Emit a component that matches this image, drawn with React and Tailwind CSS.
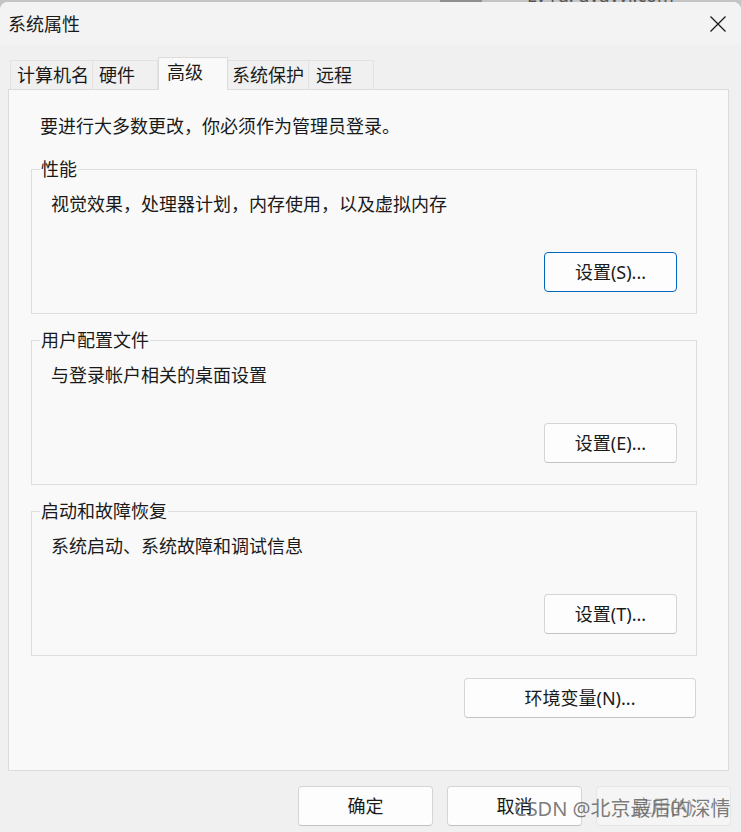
import React from "react";

const FONT = {
  fontFamily:
    '"Noto Sans", "Noto Sans CJK SC", "Microsoft YaHei", sans-serif',
};

function Btn({ children, className = "", focused = false, disabled = false }) {
  return (
    <div
      className={
        "flex items-center justify-center rounded-[4px] text-[18px] leading-[24px] " +
        (focused
          ? "border border-[#0067c0] bg-[#fdfdfd] text-[#1a1a1a] "
          : disabled
          ? "border border-[#e6e6e6] bg-[#f5f5f5] text-[#a3a3a3] "
          : "border border-[#d5d5d5] border-b-[#c2c2c2] bg-[#fdfdfd] text-[#1a1a1a] ") +
        className
      }
    >
      {children}
    </div>
  );
}

function Group({ title, text, button, focused }) {
  return (
    <fieldset className="ml-[22px] w-[666px] border border-[#dedede] pb-[21px]">
      <legend className="ml-[8px] px-[1px] text-[18px] leading-[22px] text-[#1a1a1a]">
        {title}
      </legend>
      <div className="mt-[12px] pl-[19px] text-[18px] leading-[24px] text-[#1a1a1a]">
        {text}
      </div>
      <div className="mt-[36px] flex justify-end pr-[19px]">
        <Btn focused={focused} className="h-[40px] w-[133px]">
          {button}
        </Btn>
      </div>
    </fieldset>
  );
}

const tabs = [
  { label: "计算机名", cls: "w-[83px] pl-[6px] border-l" },
  { label: "硬件", cls: "w-[65px] pl-[6px]" },
  { label: "高级", cls: "w-[70px] pl-[8px]", active: true },
  { label: "系统保护", cls: "w-[81px] pl-[4px]" },
  { label: "远程", cls: "w-[65px] pl-[7px]" },
];

export default function App() {
  return (
    <div
      className="relative h-[832px] w-[741px] overflow-hidden bg-[#c4c4c4]"
      style={FONT}
    >
      {/* sliver of the window behind */}
      <div className="flex h-[2px] overflow-hidden">
        <div className="w-[440px]" />
        <div className="h-[2px] w-[42px] bg-[#8e8e8e]" />
        <div className="-mt-[14px] pl-[45px] text-[18px] leading-[18px] text-[#555]">
          Lv ru. uvuvvr.com
        </div>
      </div>

      {/* window */}
      <div className="flex h-[830px] flex-col overflow-hidden rounded-t-[8px] bg-[#f0f0f0]">
        {/* title bar */}
        <div className="flex h-[43px] items-center justify-between bg-[#f3f3f3] pl-[8px] pr-[14px]">
          <div className="text-[18px] leading-[24px] text-[#1a1a1a]">系统属性</div>
          <svg width="18" height="18" viewBox="0 0 18 18" className="mt-[1px]">
            <path
              d="M1.5 1.5 L16.5 16.5 M16.5 1.5 L1.5 16.5"
              stroke="#1a1a1a"
              strokeWidth="1.3"
              fill="none"
            />
          </svg>
        </div>

        {/* body */}
        <div className="flex flex-1 flex-col pl-[8px] pr-[12px] pt-[12px]">
          {/* tabs */}
          <div className="relative z-10 flex h-[32px] items-end pl-[2px]">
            {tabs.map((t) =>
              t.active ? (
                <div
                  key={t.label}
                  className={`${t.cls} -mb-[1px] h-[33px] border border-b-0 border-[#dcdcdc] bg-[#f9f9f9] pt-[2px] text-[18px] leading-[24px] text-[#1a1a1a]`}
                >
                  {t.label}
                </div>
              ) : (
                <div
                  key={t.label}
                  className={`${t.cls} h-[29px] border-t border-r border-[#e2e2e2] bg-[#f0f0f0] pt-[2px] text-[18px] leading-[24px] text-[#1a1a1a]`}
                >
                  {t.label}
                </div>
              )
            )}
          </div>

          {/* panel */}
          <div className="flex h-[682px] w-[721px] flex-col border border-[#dcdcdc] bg-[#f9f9f9]">
            <div className="pl-[31px] pt-[24px] text-[18px] leading-[24px] text-[#1a1a1a]">
              要进行大多数更改，你必须作为管理员登录。
            </div>
            <div className="mt-[20px] flex flex-col gap-[15px]">
              <Group
                title="性能"
                text="视觉效果，处理器计划，内存使用，以及虚拟内存"
                button="设置(S)..."
                focused
              />
              <Group
                title="用户配置文件"
                text="与登录帐户相关的桌面设置"
                button="设置(E)..."
              />
              <Group
                title="启动和故障恢复"
                text="系统启动、系统故障和调试信息"
                button="设置(T)..."
              />
            </div>
            <div className="mt-[22px] flex justify-end pr-[32px]">
              <Btn className="h-[40px] w-[232px]">环境变量(N)...</Btn>
            </div>
          </div>

          {/* bottom buttons */}
          <div className="-mr-[2px] mt-[15px] flex justify-end gap-[14px]">
            <Btn className="h-[40px] w-[135px]">确定</Btn>
            <Btn className="h-[40px] w-[135px]">取消</Btn>
            <Btn disabled className="h-[40px] w-[135px]">
              应用(A)
            </Btn>
          </div>
        </div>
      </div>

      {/* watermark */}
      <div className="pointer-events-none absolute left-[514px] top-[797px] text-[20px] leading-[24px] text-[#5a5a5a]/80">
        CSDN @北京最后的深情
      </div>
    </div>
  );
}
